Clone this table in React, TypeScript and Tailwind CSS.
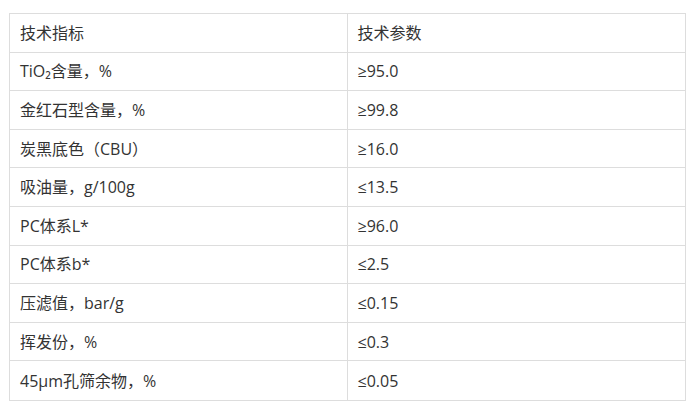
import React from "react"

const rows = [
  ["TiO₂含量，%", "≥95.0"],
  ["金红石型含量，%", "≥99.8"],
  ["炭黑底色（CBU）", "≥16.0"],
  ["吸油量，g/100g", "≤13.5"],
  ["PC体系L*", "≥96.0"],
  ["PC体系b*", "≤2.5"],
  ["压滤值，bar/g", "≤0.15"],
  ["挥发份，%", "≤0.3"],
  ["45μm孔筛余物，%", "≤0.05"],
]

const Row = ({ left, right, last }: { left: string; right: string; last?: boolean }) => (
  <div
    className={`grid grid-cols-2 h-[38.6px] ${last ? "" : "border-b border-[#dddddd]"}`}
  >
    <div className="flex items-center pl-[10px] border-r border-[#dddddd]">{left}</div>
    <div className="flex items-center pl-[10px]">{right}</div>
  </div>
)

export default function App() {
  return (
    <div
      className="w-[693px] h-[410px] bg-white pt-[13px] pl-[9px] text-[16px] text-[#333333]"
      style={{ fontFamily: '"Open Sans", "Noto Sans CJK SC", sans-serif' }}
    >
      <div className="w-[677px] border border-[#dddddd] leading-none">
        <Row left="技术指标" right="技术参数" />
        {rows.map((r, i) => (
          <Row key={r[0]} left={r[0]} right={r[1]} last={i === rows.length - 1} />
        ))}
      </div>
    </div>
  )
}
